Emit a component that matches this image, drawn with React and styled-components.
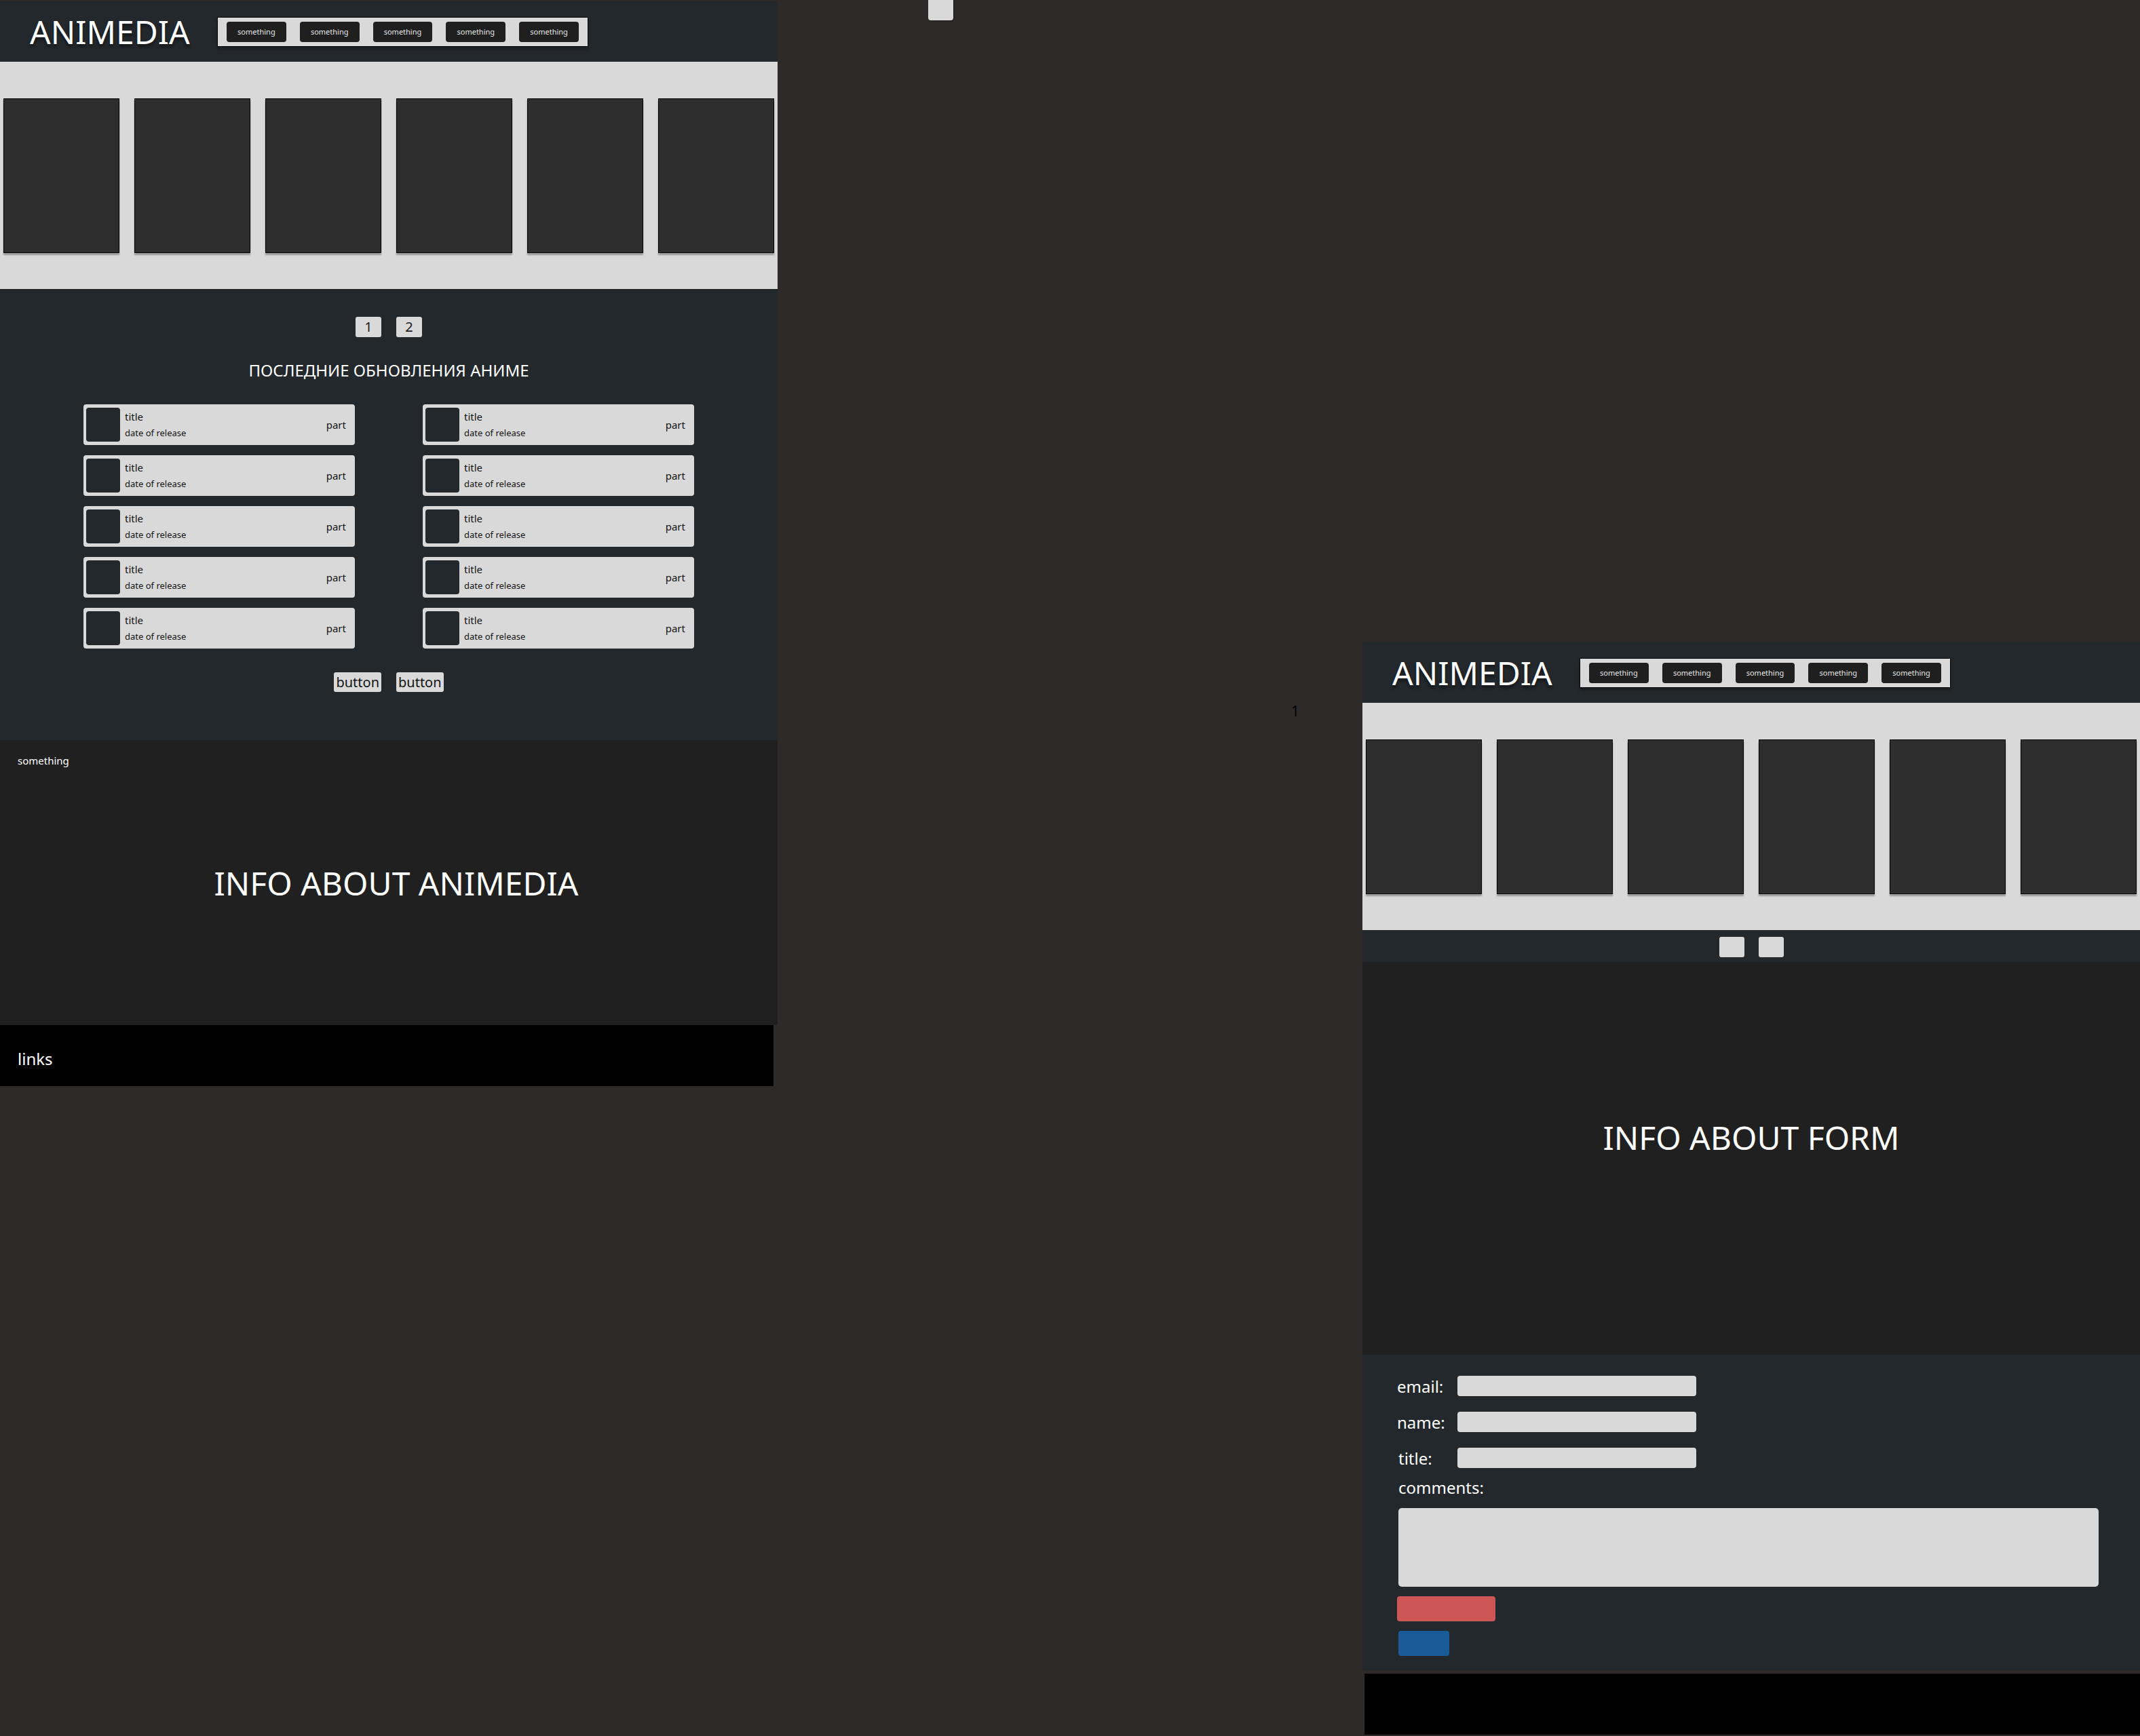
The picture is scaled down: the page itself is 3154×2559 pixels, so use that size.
import React from 'react';
import styled, { createGlobalStyle } from 'styled-components';

const GlobalStyle = createGlobalStyle`
    * { box-sizing: border-box; }
    html, body {
        margin: 0;
        padding: 0;
        overflow: hidden;
        background: #2e2a29;
        font-family: "Noto Sans", "Open Sans", sans-serif;
    }
`;

const Canvas = styled.div`
    position: relative;
    width: 3154px;
    height: 2559px;
    overflow: hidden;
    background: #2e2a29;
`;

// frames sit on a free design canvas
const Frame = styled.div`
    position: absolute;
    left: ${p => p.$left}px;
    top: ${p => p.$top}px;
    width: 1146px;
    display: flex;
    flex-direction: column;
`;

const StrayTab = styled.div`
    position: absolute;
    left: 1368px;
    top: -4px;
    width: 37px;
    height: 34px;
    border-radius: 4px;
    background: #d9d9d9;
    box-shadow: 1px 1px 2px rgba(0, 0, 0, 0.35);
`;

const StrayDigit = styled.span`
    position: absolute;
    left: 1903px;
    top: 1035px;
    font-size: 21px;
    line-height: 27px;
    color: #000;
`;

const Header = styled.header`
    height: 89px;
    display: flex;
    align-items: center;
    padding-left: 44px;
    background: #23282c;
`;

const Logo = styled.h1`
    margin: 0;
    width: 276px;
    font-size: 48px;
    font-weight: 400;
    line-height: 1;
    color: #fff;
    text-shadow: 0 4px 4px rgba(0, 0, 0, 0.45);
`;

const Nav = styled.nav`
    width: 547px;
    height: 44px;
    display: flex;
    align-items: center;
    gap: 20px;
    padding: 0 13px;
    background: #d9d9d9;
    border: 1px solid #000;
    box-shadow: 0 4px 4px rgba(0, 0, 0, 0.25);
`;

const NavButton = styled.button`
    width: 88px;
    height: 30px;
    border: none;
    border-radius: 4px;
    background: #1f1f1f;
    color: #e6e6e6;
    font-family: inherit;
    font-size: 11px;
    padding: 0;
`;

const Carousel = styled.section`
    height: 335px;
    display: flex;
    align-items: center;
    gap: 22px;
    padding-left: 5px;
    background: #d9d9d9;
`;

const Poster = styled.div`
    width: 171px;
    height: 228px;
    flex-shrink: 0;
    background: #2e2e2e;
    border: 1px solid #000;
    box-shadow: 0 3px 2px rgba(0, 0, 0, 0.3);
`;

const Pager = styled.div`
    display: flex;
    justify-content: center;
    gap: ${p => p.$gap}px;
`;

const PageButton = styled.button`
    width: ${p => p.$w}px;
    height: 30px;
    padding: 0;
    border: none;
    border-radius: 3px;
    background: #d9d9d9;
    color: #1a1a1a;
    font-family: inherit;
    font-size: 20px;
    line-height: 30px;
`;

const Updates = styled.section`
    display: flex;
    flex-direction: column;
    align-items: center;
    padding: 41px 0 71px;
    background: #23282c;
`;

const Heading = styled.h2`
    margin: 33px 0 34px;
    font-size: 24px;
    font-weight: 400;
    line-height: 32px;
    color: #fff;
`;

const UpdateGrid = styled.div`
    display: grid;
    grid-template-columns: repeat(2, 400px);
    grid-template-rows: repeat(5, 60px);
    grid-auto-flow: column;
    column-gap: 100px;
    row-gap: 15px;
`;

const UpdateRow = styled.div`
    display: flex;
    align-items: center;
    padding: 0 13px 0 4px;
    border-radius: 4px;
    background: #d9d9d9;
    color: #141414;
`;

const Thumb = styled.div`
    width: 50px;
    height: 50px;
    border-radius: 4px;
    background: #23282c;
`;

const RowText = styled.div`
    display: flex;
    flex-direction: column;
    gap: 4px;
    margin-left: 7px;
`;

const RowTitle = styled.span`
    font-size: 15px;
    line-height: 20px;
`;

const RowDate = styled.span`
    font-size: 13px;
    line-height: 20px;
`;

const RowPart = styled.span`
    margin-left: auto;
    font-size: 15px;
    line-height: 20px;
`;

const TextButton = styled.button`
    height: 29px;
    padding: 0 3px;
    border: none;
    border-radius: 3px;
    background: #d9d9d9;
    color: #141414;
    font-family: inherit;
    font-size: 20px;
    line-height: 29px;
`;

const ButtonRow = styled(Pager)`
    margin-top: 35px;
`;

const Info = styled.section`
    height: ${p => p.$h}px;
    display: grid;
    padding-bottom: ${p => p.$pb || 0}px;
    background: #202020;
    color: #fff;
`;

const InfoLabel = styled.span`
    grid-area: 1 / 1;
    align-self: start;
    padding: 20px 0 0 26px;
    font-size: 15px;
`;

const InfoTitle = styled.h2`
    grid-area: 1 / 1;
    align-self: center;
    justify-self: center;
    margin: 0 0 0 ${p => p.$shift || 0}px;
    font-size: 48px;
    font-weight: 400;
    line-height: 65px;
`;

const Footer = styled.footer`
    width: ${p => p.$w}px;
    height: 90px;
    margin: ${p => p.$m || '0'};
    display: flex;
    align-items: center;
    padding: 8px 0 0 26px;
    background: #000;
    color: #fff;
    font-size: 24px;
`;

const PagerBand = styled.div`
    height: 47px;
    padding-top: 10px;
    background: #23282c;
`;

const Form = styled.form`
    display: flex;
    flex-direction: column;
    align-items: flex-start;
    padding: 31px 0 21px 51px;
    background: #23282c;
    color: #fff;
`;

const Field = styled.label`
    display: flex;
    align-items: center;
    height: 30px;
    margin-bottom: 23px;
    font-size: 24px;
    &:last-of-type { margin-bottom: 0; }
`;

const FieldName = styled.span`
    width: 89px;
    padding-left: ${p => p.$indent || 0}px;
    line-height: 33px;
`;

const TextInput = styled.input`
    width: 352px;
    height: 30px;
    border: none;
    border-radius: 4px;
    background: #d9d9d9;
`;

const CommentsLabel = styled.span`
    margin: 12px 0 0 2px;
    font-size: 24px;
    line-height: 33px;
`;

const Comments = styled.textarea`
    width: 1032px;
    height: 116px;
    margin: 14px 0 0 2px;
    border: none;
    border-radius: 5px;
    background: #d9d9d9;
    resize: none;
`;

const ColorButton = styled.button`
    width: ${p => p.$w}px;
    height: 37px;
    margin: 14px 0 0 ${p => p.$ml || 0}px;
    border: none;
    border-radius: 4px;
    background: ${p => p.$bg};
`;

const navItems = ['something', 'something', 'something', 'something', 'something'];

const TopBar = () => (
    <Header>
        <Logo>ANIMEDIA</Logo>
        <Nav>
            {navItems.map((t, i) => <NavButton key={i}>{t}</NavButton>)}
        </Nav>
    </Header>
);

const Posters = () => (
    <Carousel>
        {[0, 1, 2, 3, 4, 5].map(i => <Poster key={i} />)}
    </Carousel>
);

const App = () => {
    return (
        <Canvas>
            <GlobalStyle />
            <StrayTab />
            <StrayDigit>1</StrayDigit>

            <Frame $left={0} $top={2}>
                <TopBar />
                <Posters />
                <Updates>
                    <Pager $gap={22}>
                        <PageButton $w={38}>1</PageButton>
                        <PageButton $w={38}>2</PageButton>
                    </Pager>
                    <Heading>ПОСЛЕДНИЕ ОБНОВЛЕНИЯ АНИМЕ</Heading>
                    <UpdateGrid>
                        {Array.from({ length: 10 }).map((_, i) => (
                            <UpdateRow key={i}>
                                <Thumb />
                                <RowText>
                                    <RowTitle>title</RowTitle>
                                    <RowDate>date of release</RowDate>
                                </RowText>
                                <RowPart>part</RowPart>
                            </UpdateRow>
                        ))}
                    </UpdateGrid>
                    <ButtonRow $gap={22}>
                        <TextButton>button</TextButton>
                        <TextButton>button</TextButton>
                    </ButtonRow>
                </Updates>
                <Info $h={420}>
                    <InfoLabel>something</InfoLabel>
                    <InfoTitle $shift={22}>INFO ABOUT ANIMEDIA</InfoTitle>
                </Info>
                <Footer $w={1140}>links</Footer>
            </Frame>

            <Frame $left={2008} $top={947}>
                <TopBar />
                <Posters />
                <PagerBand>
                    <Pager $gap={21}>
                        <PageButton $w={37} />
                        <PageButton $w={37} />
                    </Pager>
                </PagerBand>
                <Info $h={579} $pb={62}>
                    <InfoTitle>INFO ABOUT FORM</InfoTitle>
                </Info>
                <Form>
                    <Field><FieldName>email:</FieldName><TextInput /></Field>
                    <Field><FieldName>name:</FieldName><TextInput /></Field>
                    <Field><FieldName $indent={2}>title:</FieldName><TextInput /></Field>
                    <CommentsLabel>comments:</CommentsLabel>
                    <Comments />
                    <ColorButton $w={145} $bg="#cd5656" />
                    <ColorButton $w={75} $ml={2} $bg="#1a5a96" />
                </Form>
                <Footer $w={1143} $m="5px 0 0 3px" />
            </Frame>
        </Canvas>
    );
};

export default App;
